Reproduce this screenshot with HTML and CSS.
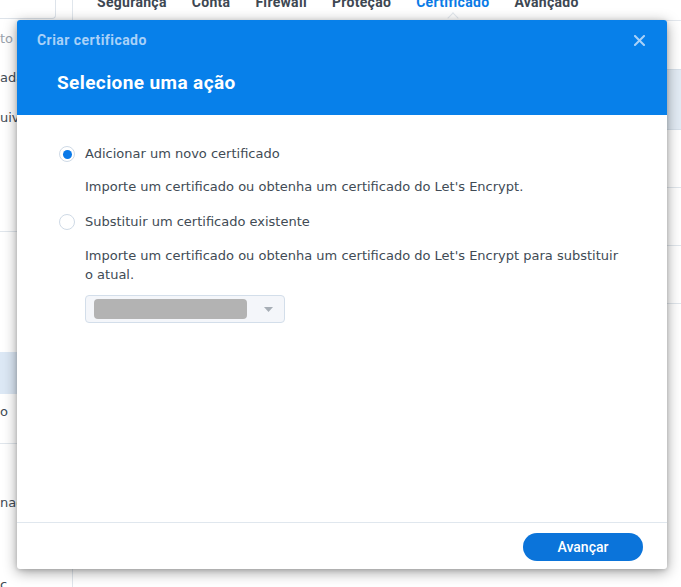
FILE: index.html
```html
<!DOCTYPE html>
<html lang="pt">
<head>
<meta charset="utf-8">
<title>Criar certificado</title>
<link rel="stylesheet" href="styles.css">
</head>
<body>
<div class="app">
  <aside class="sidebar">
    <div class="search"></div>
    <div class="nav-item nav-group h38">to compartilhado</div>
    <div class="nav-item h40">ada</div>
    <div class="nav-item h41">uivo</div>
    <div class="nav-space s93"></div>
    <div class="nav-divider"></div>
    <div class="nav-space s120"></div>
    <div class="nav-item nav-active h42"></div>
    <div class="nav-item h35">o</div>
    <div class="nav-space s14"></div>
    <div class="nav-divider"></div>
    <div class="nav-space s38"></div>
    <div class="nav-item h40">nag</div>
    <div class="nav-space s42"></div>
    <div class="nav-item h40">c</div>
  </aside>
  <main class="main">
    <nav class="tabs">
      <span class="tab">Segurança</span>
      <span class="tab">Conta</span>
      <span class="tab">Firewall</span>
      <span class="tab">Proteção</span>
      <span class="tab tab-active">Certificado</span>
      <span class="tab">Avançado</span>
    </nav>
    <div class="table">
      <div class="thead"></div>
      <div class="trow"></div>
      <div class="trow"></div>
      <div class="trow"></div>
    </div>
  </main>
</div>

<div class="dialog">
  <header class="dlg-head">
    <div class="dlg-topbar">
      <span class="dlg-caption">Criar certificado</span>
      <svg class="dlg-close" width="11" height="11" viewBox="0 0 11 11" aria-label="Fechar">
        <path d="M1 1 L10 10 M10 1 L1 10" stroke="#a9d1f8" stroke-width="2" stroke-linecap="square"/>
      </svg>
    </div>
    <h1 class="dlg-title">Selecione uma ação</h1>
  </header>
  <section class="dlg-body">
    <label class="option">
      <span class="radio radio-checked"></span>
      <span class="option-label">Adicionar um novo certificado</span>
    </label>
    <p class="desc">Importe um certificado ou obtenha um certificado do Let's Encrypt.</p>
    <label class="option option-second">
      <span class="radio"></span>
      <span class="option-label">Substituir um certificado existente</span>
    </label>
    <p class="desc">Importe um certificado ou obtenha um certificado do Let's Encrypt para substituir o atual.</p>
    <div class="select">
      <span class="select-value"></span>
      <svg class="select-caret" width="9" height="5" viewBox="0 0 9 5"><path d="M0 0 H9 L4.5 5 Z" fill="#a7aeb6"/></svg>
    </div>
  </section>
  <footer class="dlg-foot">
    <button class="btn-primary">Avançar</button>
  </footer>
</div>
</body>
</html>
```

FILE: styles.css
```css
* { box-sizing: border-box; }

html, body {
  margin: 0;
  padding: 0;
  height: 100%;
  background: #ffffff;
  overflow: hidden;
}

body {
  font-family: "DejaVu Sans", Verdana, sans-serif;
  color: #414b55;
}

.app {
  display: flex;
  height: 587px;
}

/* sidebar */
.sidebar {
  width: 73px;
  flex: none;
  border-right: 1px solid #e0e6ec;
  overflow: hidden;
  font-size: 13px;
}

.search {
  width: 56px;
  height: 19px;
  border-right: 1px solid #dde3ea;
  border-bottom: 1px solid #dde3ea;
  border-bottom-right-radius: 4px;
}

.nav-item {
  display: flex;
  align-items: center;
  white-space: nowrap;
  color: #414b55;
}

.nav-group { color: #9aa3ad; }
.nav-active { background: #dce8f5; }

.h35 { height: 35px; }
.h38 { height: 38px; }
.h40 { height: 40px; }
.h41 { height: 41px; }
.h42 { height: 42px; }

.nav-space.s14 { height: 14px; }
.nav-space.s38 { height: 38px; }
.nav-space.s42 { height: 42px; }
.nav-space.s93 { height: 93px; }
.nav-space.s120 { height: 120px; }

.nav-divider {
  height: 1px;
  background: #e0e6ec;
}

/* main */
.main {
  flex: 1;
  min-width: 0;
}

.tabs {
  position: relative;
  height: 21px;
  border-bottom: 1px solid #e3e8ee;
  display: flex;
  gap: 25px;
  padding-left: 24px;
}

.tab {
  position: relative;
  font-family: Roboto, "Liberation Sans", sans-serif;
  font-weight: 700;
  font-size: 14px;
  letter-spacing: 0.3px;
  line-height: 16px;
  margin-top: -6px;
  color: #3d4752;
  white-space: nowrap;
}

.tab-active { color: #0a7be6; }

.tab-active::after {
  content: "";
  position: absolute;
  left: 50%;
  top: 20px;
  width: 7px;
  height: 7px;
  margin-left: -4px;
  background: #ffffff;
  border-top: 1px solid #e3e8ee;
  border-left: 1px solid #e3e8ee;
  transform: rotate(45deg);
}

.table {
  margin-top: 48px;
}

.thead {
  height: 61px;
  background: #e2ebf4;
  border-top: 1px solid #d6e0ea;
  border-bottom: 1px solid #d6e0ea;
}

.trow {
  height: 58px;
  border-bottom: 1px solid #e0e6ec;
}

/* dialog */
.dialog {
  position: absolute;
  left: 17px;
  top: 20px;
  width: 650px;
  height: 549px;
  background: #ffffff;
  border-radius: 3px;
  overflow: hidden;
  display: flex;
  flex-direction: column;
  box-shadow: 0 3px 14px rgba(0, 0, 0, 0.38), 0 1px 4px rgba(0, 0, 0, 0.15);
}

.dlg-head {
  background: #0780ea;
  height: 95px;
  flex: none;
  padding: 0 22px 0 20px;
}

.dlg-topbar {
  height: 40px;
  display: flex;
  align-items: center;
  justify-content: space-between;
}

.dlg-caption {
  font-family: Roboto, "Liberation Sans", sans-serif;
  font-weight: 700;
  font-size: 14px;
  letter-spacing: 0.45px;
  color: #a9d1f8;
}

.dlg-close { display: block; }

.dlg-title {
  margin: 13px 0 0 20px;
  font-family: Roboto, "Liberation Sans", sans-serif;
  font-weight: 700;
  font-size: 19px;
  letter-spacing: 0.4px;
  line-height: 20px;
  color: #ffffff;
}

.dlg-body {
  flex: 1;
  padding: 29px 42px 0 42px;
  font-size: 13px;
}

.option {
  display: flex;
  align-items: center;
  gap: 10px;
  height: 20px;
}

.option-second { margin-top: 16px; }

.option-label {
  color: #414b55;
  line-height: 20px;
}

.radio {
  width: 16px;
  height: 16px;
  flex: none;
  border-radius: 50%;
  border: 1px solid #cfdae6;
  background: #ffffff;
  display: flex;
  align-items: center;
  justify-content: center;
}

.radio-checked::after {
  content: "";
  width: 9px;
  height: 9px;
  border-radius: 50%;
  background: #0a79e8;
}

.desc {
  margin: 13px 0 0 26px;
  line-height: 19px;
  color: #414b55;
}

.option-second + .desc { margin-top: 14px; }

.select {
  margin: 11px 0 0 26px;
  width: 200px;
  height: 28px;
  border: 1px solid #d3deea;
  border-radius: 4px;
  background: #f4f6fa;
  display: flex;
  align-items: center;
  padding: 0 11px 0 8px;
  justify-content: space-between;
}

.select-value {
  width: 153px;
  height: 20px;
  border-radius: 4px;
  background: #b3b3b3;
}

.select-caret { display: block; }

.dlg-foot {
  flex: none;
  height: 47px;
  border-top: 1px solid #e0e7ee;
  display: flex;
  align-items: center;
  justify-content: flex-end;
  padding-right: 24px;
}

.btn-primary {
  width: 120px;
  height: 28px;
  border: none;
  border-radius: 14px;
  background: #0b74da;
  color: #ffffff;
  font-family: Roboto, "Liberation Sans", sans-serif;
  font-weight: 500;
  font-size: 14px;
  padding: 0;
  margin-top: 1px;
}
```
